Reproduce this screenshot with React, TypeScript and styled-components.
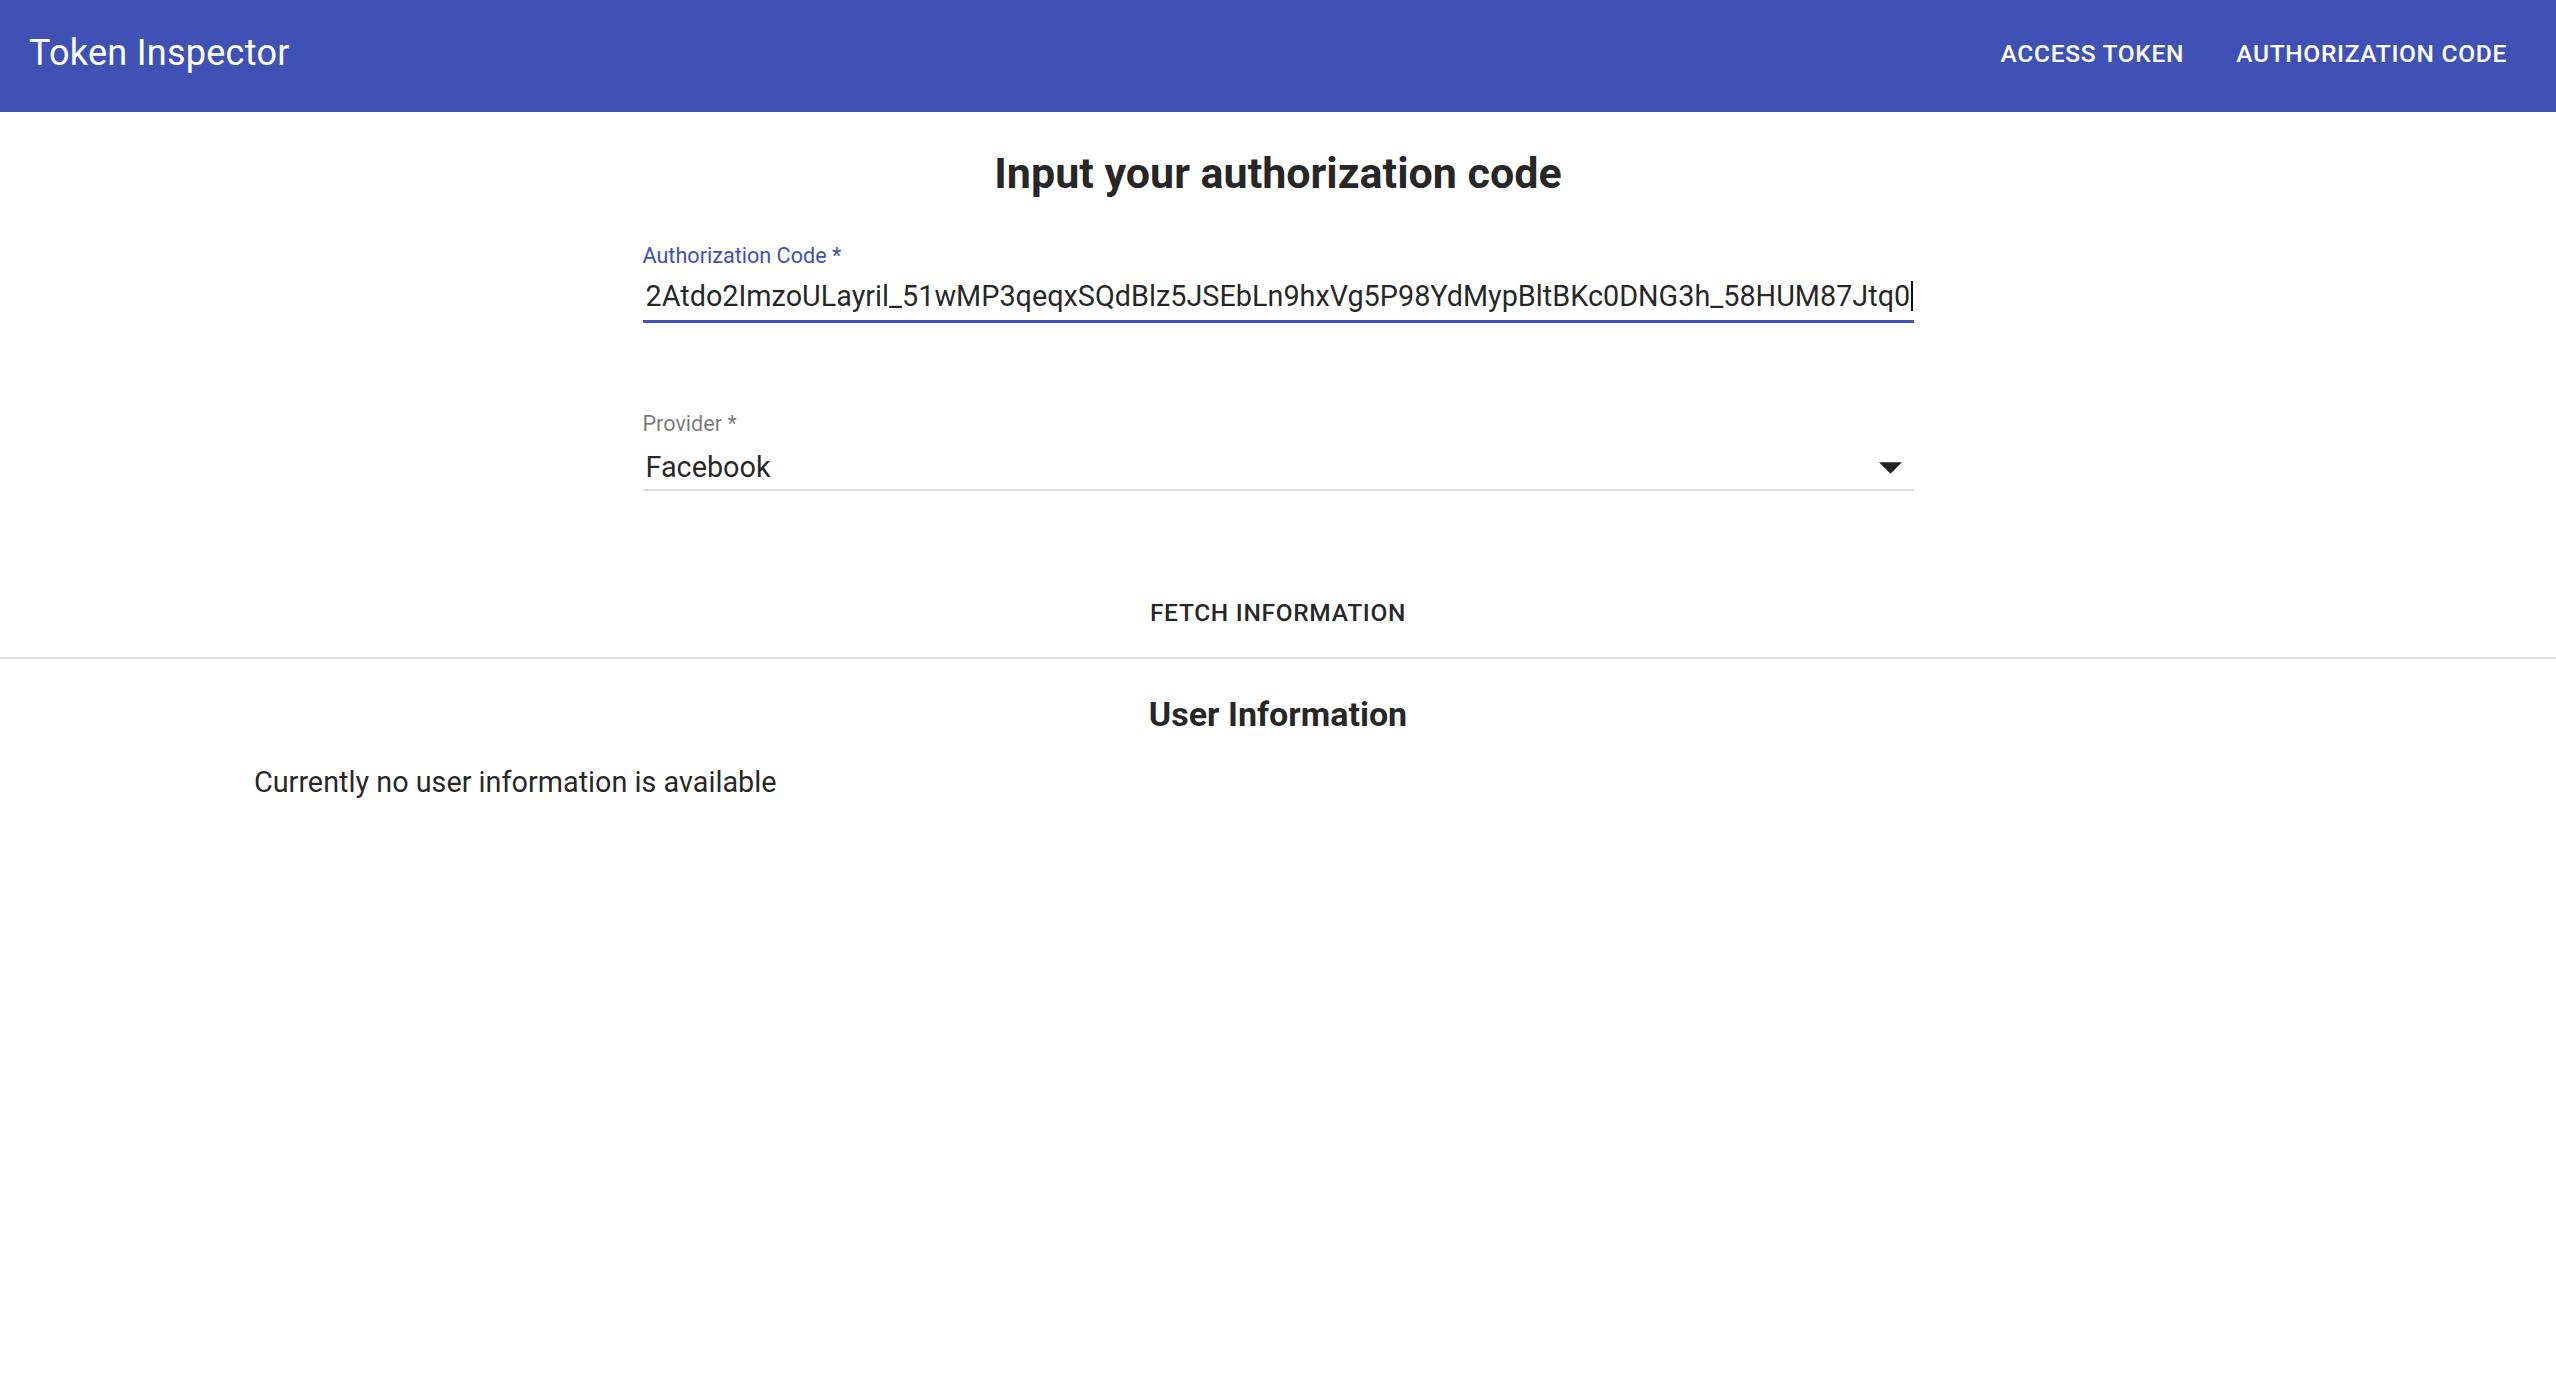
import React from "react";
import styled, { createGlobalStyle } from "styled-components";

const GlobalStyle = createGlobalStyle`
  html, body { margin: 0; padding: 0; background: #fff; }
  body {
    font-family: Roboto, "Helvetica Neue", Arial, sans-serif;
    color: rgba(0, 0, 0, 0.87);
  }
  * { box-sizing: border-box; }
`;

const AppBar = styled.header`
  height: 112px;
  background: #3f51b5;
  color: #fff;
  display: flex;
  align-items: center;
  padding: 0 35px 4px 29px;
`;

const Title = styled.h1`
  flex: 1;
  margin: 0;
  font-size: 36px;
  font-weight: 400;
  line-height: 1.6;
  letter-spacing: 0.27px;
`;

const Nav = styled.nav`
  display: flex;
  gap: 24px;
`;

const NavButton = styled.button`
  border: 0;
  background: transparent;
  color: #fff;
  font-family: inherit;
  font-size: 24.5px;
  font-weight: 500;
  letter-spacing: 0.7px;
  text-transform: uppercase;
  line-height: 1.75;
  padding: 10.5px 14px;
  cursor: pointer;
`;

const Main = styled.main`
  display: flex;
  flex-direction: column;
`;

const Heading = styled.h2`
  margin: 33px 0 0;
  text-align: center;
  font-size: 43px;
  font-weight: 700;
  line-height: 56px;
  color: rgba(0, 0, 0, 0.87);
`;

const Form = styled.form`
  width: 1271px;
  margin: 0 auto;
  display: flex;
  flex-direction: column;
`;

const Field = styled.div<{ $top: number }>`
  display: flex;
  flex-direction: column;
  margin-top: ${(p) => p.$top}px;
`;

const Label = styled.label<{ $focused?: boolean }>`
  font-size: 21.6px;
  line-height: 21px;
  color: ${(p) => (p.$focused ? "#3f51b5" : "rgba(0, 0, 0, 0.54)")};
`;

const InputRow = styled.div<{ $focused?: boolean; $gap: number; $pad: number }>`
  display: flex;
  align-items: center;
  margin-top: ${(p) => p.$gap}px;
  padding: 0 0 ${(p) => p.$pad}px 3px;
  border-bottom: ${(p) => (p.$focused ? "3px solid #3f51b5" : "2px solid #dedede")};
  font-size: 28.8px;
  line-height: 33px;
  color: rgba(0, 0, 0, 0.87);
  white-space: nowrap;
  overflow: hidden;
`;

const Value = styled.span`
  flex: 1;
`;

const Caret = styled.span`
  display: inline-block;
  width: 2px;
  height: 30px;
  margin-left: 1px;
  vertical-align: -5px;
  background: #111;
`;

const DropIcon = styled.svg`
  width: 23px;
  height: 12px;
  margin-right: 12px;
  fill: rgba(0, 0, 0, 0.87);
`;

const FetchButton = styled.button`
  align-self: center;
  margin-top: 90px;
  border: 0;
  background: transparent;
  color: rgba(0, 0, 0, 0.87);
  font-family: inherit;
  font-size: 24.5px;
  font-weight: 500;
  letter-spacing: 0.7px;
  text-transform: uppercase;
  line-height: 1.75;
  padding: 10.5px 14px;
  cursor: pointer;
`;

const Divider = styled.hr`
  margin: 12.5px 0 0;
  border: 0;
  height: 2px;
  background: #e0e0e0;
`;

const InfoSection = styled.section`
  display: flex;
  flex-direction: column;
  padding: 0 254px;
`;

const InfoTitle = styled.h3`
  margin: 34px 0 0;
  text-align: center;
  font-size: 34px;
  font-weight: 700;
  line-height: 42px;
  color: rgba(0, 0, 0, 0.87);
`;

const InfoText = styled.p`
  margin: 26px 0 0;
  font-size: 28.8px;
  line-height: 42px;
  color: rgba(0, 0, 0, 0.87);
`;

const CODE =
  "2Atdo2ImzoULayril_51wMP3qeqxSQdBlz5JSEbLn9hxVg5P98YdMypBltBKc0DNG3h_58HUM87Jtq0";

export default function App() {
  return (
    <>
      <GlobalStyle />
      <AppBar>
        <Title>Token Inspector</Title>
        <Nav>
          <NavButton>Access Token</NavButton>
          <NavButton>Authorization Code</NavButton>
        </Nav>
      </AppBar>
      <Main>
        <Heading>Input your authorization code</Heading>
        <Form onSubmit={(e) => e.preventDefault()}>
          <Field $top={44}>
            <Label $focused>Authorization Code *</Label>
            <InputRow $focused $gap={14} $pad={7}>
              <Value>
                {CODE}
                <Caret />
              </Value>
            </InputRow>
          </Field>
          <Field $top={90}>
            <Label>Provider *</Label>
            <InputRow $gap={17} $pad={5}>
              <Value>Facebook</Value>
              <DropIcon viewBox="0 0 24 12">
                <polygon points="0,0 24,0 12,12" />
              </DropIcon>
            </InputRow>
          </Field>
          <FetchButton type="submit">Fetch Information</FetchButton>
        </Form>
        <Divider />
        <InfoSection>
          <InfoTitle>User Information</InfoTitle>
          <InfoText>Currently no user information is available</InfoText>
        </InfoSection>
      </Main>
    </>
  );
}
